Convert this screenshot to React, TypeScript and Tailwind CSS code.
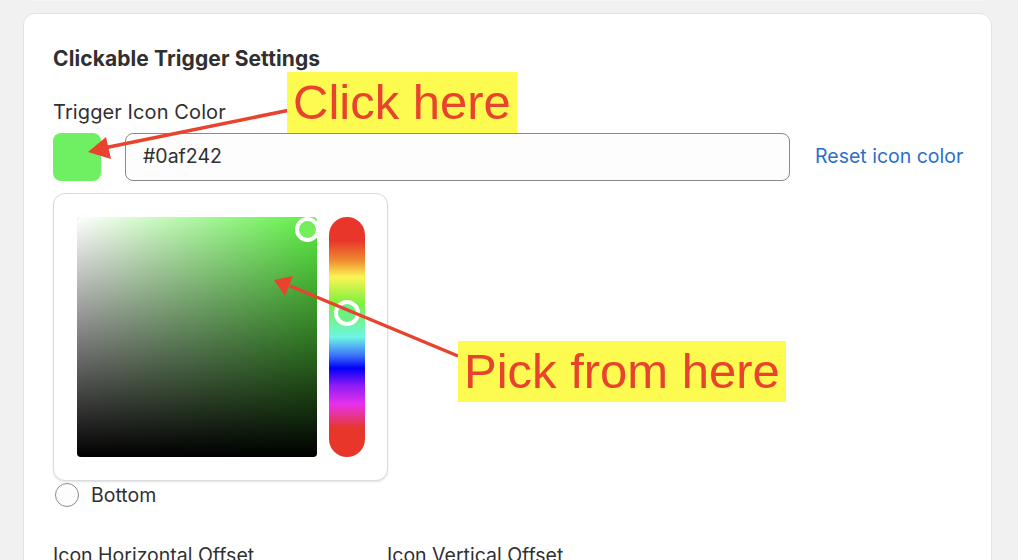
import React from "react";

const ui = { fontFamily: "Inter, 'Noto Sans', sans-serif" };
const anno = { fontFamily: "'Liberation Sans', Arial, sans-serif" };

function ColorPicker() {
  return (
    <div className="flex w-[335px] gap-3 rounded-xl border border-[#dcdcdc] bg-white py-[23px] pl-[23px] pr-[22px] shadow-[0_1px_2px_rgba(0,0,0,0.12)]">
      <div className="relative h-[240px] w-[240px] rounded-[4px] bg-[#5cf042]">
        <div className="absolute inset-0 rounded-[4px] bg-gradient-to-r from-white to-transparent" />
        <div className="absolute inset-0 rounded-[4px] bg-gradient-to-b from-transparent to-black" />
        <div className="absolute left-[218px] top-0 h-[25px] w-[25px] rounded-full border-[4px] border-white bg-[#74ef5c]" />
      </div>
      <div className="relative h-[240px] w-[36px] rounded-full bg-[linear-gradient(to_bottom,#e8372a_0%,#e8372a_10%,#f08a30_18%,#fbf553_25%,#7cf040_36%,#6cf6e6_50%,#3a6dfb_58%,#0000f5_63%,#8a1bf5_70%,#e731ec_78%,#e8372a_88%,#e8372a_100%)]">
        <div className="absolute left-[5px] top-[83px] h-[26px] w-[26px] rounded-full border-[4px] border-white bg-[#6cf080]" />
      </div>
    </div>
  );
}

export default function App() {
  return (
    <div className="relative h-[560px] w-[1018px] overflow-hidden bg-[#f1f1f1] text-[#303030]" style={ui}>
      <div className="mx-[30px] h-px w-[955px] bg-[#f7f7f7]" />
      <div className="ml-[23px] mt-[12px] w-[969px] rounded-xl border border-[#e3e3e3] bg-white px-[29px] pt-[33px] pb-10">
        <h2 className="text-[21px] font-bold leading-6 tracking-[0.1px] text-[#303030]">Clickable Trigger Settings</h2>
        <p className="mt-[29px] text-[20px] leading-6 tracking-[0.1px]">Trigger Icon Color</p>
        <div className="mt-[9px] flex items-center">
          <div className="h-12 w-12 shrink-0 rounded-lg bg-[#6ff062]" />
          <div className="ml-6 flex h-12 w-[665px] shrink-0 items-center rounded-lg border border-[#8a8a8a] bg-[#fdfdfd] px-[17px] text-[19.5px]">
            #0af242
          </div>
          <button className="ml-[25px] shrink-0 whitespace-nowrap text-[19.5px] text-[#2c6ecb]">Reset icon color</button>
        </div>
        <div className="mt-3">
          <ColorPicker />
        </div>
        <label className="mt-[2px] flex items-center gap-3 pl-[2px]">
          <span className="h-6 w-6 rounded-full border border-[#8a8a8a] bg-[#fdfdfd]" />
          <span className="text-[19.5px] leading-6">Bottom</span>
        </label>
        <div className="mt-[36px] flex text-[19.5px] leading-6">
          <span className="w-[334px]">Icon Horizontal Offset</span>
          <span>Icon Vertical Offset</span>
        </div>
      </div>

      <svg className="pointer-events-none absolute inset-0" width="1018" height="560">
        <g stroke="#e8432e" strokeWidth="3.5" fill="#e8432e">
          <line x1="290" y1="110" x2="104" y2="148" />
          <polygon points="88,152 106,137 111,159" stroke="none" />
          <line x1="458" y1="356" x2="290" y2="286" />
          <polygon points="274,280 293,276 285,296" stroke="none" />
        </g>
      </svg>
      <div
        className="absolute left-[287px] top-[72px] h-[61px] bg-[#fdfb50] px-[6px] text-[49px] leading-[61px] text-[#e8432e]"
        style={anno}
      >
        Click here
      </div>
      <div
        className="absolute left-[458px] top-[341px] h-[61px] bg-[#fdfb50] px-[6px] text-[49px] leading-[61px] text-[#e8432e]"
        style={anno}
      >
        Pick from here
      </div>
    </div>
  );
}
